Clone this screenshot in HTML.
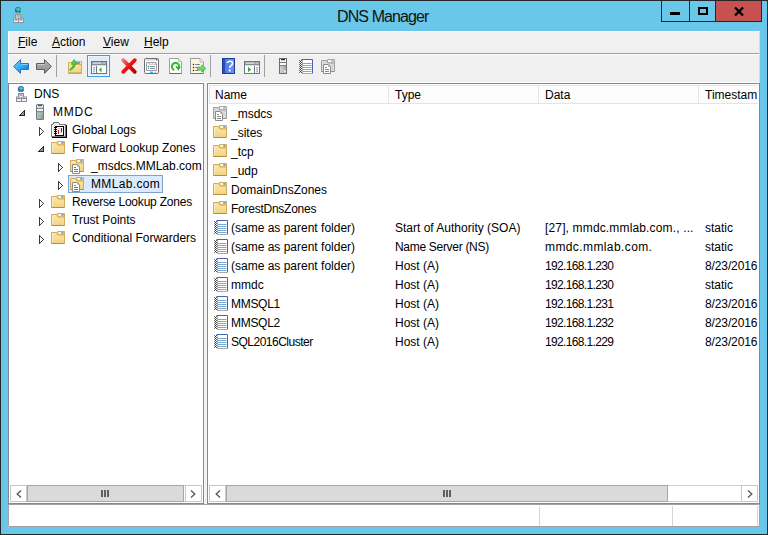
<!DOCTYPE html>
<html><head><meta charset="utf-8"><style>
*{margin:0;padding:0;box-sizing:border-box}
html,body{width:768px;height:535px;overflow:hidden}
body{position:relative;background:#262626;font-family:"Liberation Sans",sans-serif;font-size:12px;color:#000}
.a{position:absolute}
.t{position:absolute;white-space:nowrap;line-height:14px;height:14px;letter-spacing:0}
.n{letter-spacing:-0.65px}
.d{letter-spacing:-0.12px}
svg{position:absolute;overflow:visible}
.u{text-decoration:underline}
</style></head><body>

<svg width="0" height="0" style="position:absolute">
<defs>
<linearGradient id="fg" x1="0" y1="0" x2="0" y2="1"><stop offset="0" stop-color="#fbe7a8"/><stop offset="1" stop-color="#f2d283"/></linearGradient>
<linearGradient id="bluear" x1="0" y1="0" x2="1" y2="1"><stop offset="0" stop-color="#7fd2ff"/><stop offset="0.6" stop-color="#2aa2f0"/><stop offset="1" stop-color="#0068c8"/></linearGradient>
<linearGradient id="grayar" x1="0" y1="0" x2="0" y2="1"><stop offset="0" stop-color="#b8b8b8"/><stop offset="1" stop-color="#8a8a8a"/></linearGradient>
<linearGradient id="srvg" x1="0" y1="0" x2="1" y2="0"><stop offset="0" stop-color="#d8d8d8"/><stop offset="1" stop-color="#a8a8a8"/></linearGradient>
<linearGradient id="redx" x1="0" y1="0" x2="1" y2="1"><stop offset="0" stop-color="#f57070"/><stop offset="0.5" stop-color="#ee1010"/><stop offset="1" stop-color="#b80000"/></linearGradient>
<linearGradient id="help" x1="0" y1="0" x2="1" y2="1"><stop offset="0" stop-color="#5a86e8"/><stop offset="1" stop-color="#2f56c8"/></linearGradient>
<linearGradient id="srv" x1="0" y1="0" x2="1" y2="1"><stop offset="0" stop-color="#d4dce2"/><stop offset="1" stop-color="#8e989f"/></linearGradient>
<symbol id="folder" viewBox="0 0 16 16">
<path d="M6.5 1.5H13.5V5H6.5Z" fill="#f6e2a2" stroke="#d3ad5c"/>
<rect x="7.5" y="2.3" width="3" height="1.3" fill="#fff"/><rect x="10.3" y="2.3" width="2.2" height="1.3" fill="#3a86e2"/>
<path d="M0.5 2.5H5.5L7 5H13.5V13.5H0.5Z" fill="url(#fg)" stroke="#d2ab58"/>
<path d="M1.5 3.5V12.5" stroke="#fff3c8" opacity="0.8"/>
<path d="M0.5 13.5H13.5" stroke="#b98f3c"/>
</symbol>
<symbol id="zone_gray" viewBox="0 0 16 16">
<path d="M6.5 1.5H13.5V5H6.5Z" fill="#ececec" stroke="#a8a8a8"/>
<rect x="7.5" y="2.3" width="3" height="1.3" fill="#fff"/><rect x="10.3" y="2.3" width="2.2" height="1.3" fill="#9a9a9a"/>
<path d="M0.5 2.5H5.5L7 5H13.5V13.5H0.5Z" fill="#d9d9d9" stroke="#a2a2a2"/>
<path d="M0.5 13.5H13.5" stroke="#929292"/>
<path d="M2.5 6.5H7.5L9.5 8.5V15.5H2.5Z" fill="#fff" stroke="#8a8a8a"/>
<path d="M7.5 6.5V8.5H9.5" fill="none" stroke="#b8b8b8"/>
<path d="M4 9.5h2M4 11.5h4M4 13.5h4" stroke="#888"/>
</symbol>
<symbol id="zone" viewBox="0 0 16 16">
<path d="M6.5 1.5H13.5V5H6.5Z" fill="#f6e2a2" stroke="#d3ad5c"/>
<rect x="7.5" y="2.3" width="3" height="1.3" fill="#fff"/><rect x="10.3" y="2.3" width="2.2" height="1.3" fill="#3a86e2"/>
<path d="M0.5 2.5H5.5L7 5H13.5V13.5H0.5Z" fill="url(#fg)" stroke="#d2ab58"/>
<path d="M0.5 13.5H13.5" stroke="#b98f3c"/>
<path d="M2.5 6.5H7.5L9.5 8.5V15.5H2.5Z" fill="#fff" stroke="#8a8a8a"/>
<path d="M7.5 6.5V8.5H9.5" fill="none" stroke="#b8b8b8"/>
<path d="M4 9.5h2M4 11.5h4M4 13.5h4" stroke="#3c7fd0"/>
</symbol>
<symbol id="rec" viewBox="0 0 16 16">
<rect x="4" y="1.5" width="10.5" height="14" fill="#fff"/>
<path d="M4 15.5H14" stroke="#a8a8a8"/>
<path d="M3.5 1.5H14.5V15.5" fill="none" stroke="#4a60b0"/>
<path d="M5 5.5h8.5M5 7.5h8.5M5 9.5h8.5M5 11.5h8.5M5 13.5h8.5" stroke="#7ba8d0"/>
<path d="M4.5 2v13.5" stroke="#b0b0b0"/>
<path d="M1.5 2v13" stroke="#777" stroke-dasharray="1 1"/>
<path d="M2.5 3v12" stroke="#333" stroke-dasharray="1 1"/>
<path d="M3.5 2v13" stroke="#555" stroke-dasharray="1 1"/>
</symbol>
<symbol id="server" viewBox="0 0 8 16">
<rect x="0.5" y="0.5" width="7" height="15" rx="0.6" fill="url(#srv)" stroke="#6f777e"/>
<rect x="1" y="1" width="6" height="2.8" fill="#f4f6f8"/><rect x="2" y="1.2" width="4" height="1" fill="#26394a"/>
<rect x="1" y="5" width="6" height="2.2" fill="#eef2f4"/>
<path d="M1 4.4h6M1 7.7h6" stroke="#7a8288"/>
<rect x="5" y="12.5" width="2" height="2" fill="#44dd22"/>
</symbol>
<symbol id="servergray" viewBox="0 0 8 16">
<rect x="0.5" y="0.5" width="7" height="15" fill="url(#srvg)" stroke="#6e6e6e"/>
<rect x="1" y="1" width="6" height="3" fill="#fafafa"/><rect x="2" y="1" width="4" height="1.2" fill="#262626"/>
<rect x="1" y="5" width="6" height="2.2" fill="#fafafa"/>
<path d="M1 4.5h6M1 7.7h6" stroke="#7a7a7a"/>
<rect x="5" y="12.5" width="2" height="2" fill="#eaeaea"/>
</symbol>
</defs></svg>

<!-- window frame -->
<div class="a" style="left:1px;top:1px;width:766px;height:533px;background:#69c8e9"></div>
<!-- title icon -->
<svg style="left:13px;top:6px" width="11" height="17" viewBox="0 0 11 17">
<radialGradient id="glb2" cx="0.55" cy="0.4" r="0.6"><stop offset="0" stop-color="#8fd0ff"/><stop offset="0.5" stop-color="#2f7ae0"/><stop offset="1" stop-color="#1a3aa8"/></radialGradient>
<circle cx="5" cy="4" r="3" fill="url(#glb2)"/>
<path d="M2.2 2.6Q3.6 1.9 4.6 2.8L3.8 4.2Q2.6 4 2.2 2.6Z M6.8 2.9L8 3.6L7.9 5.3L6.8 4.6Z M3.6 5.8L5.8 5.6L5.6 7L4 6.9Z" fill="#2ee02e"/>
<rect x="2.5" y="8.5" width="5" height="4" fill="#eee" stroke="#959595"/>
<rect x="0.5" y="12.2" width="5" height="4.3" fill="#eee" stroke="#959595"/>
<rect x="5.5" y="12.2" width="5" height="4.3" fill="#eee" stroke="#959595"/>
<path d="M3.5 10h3M1.5 13.8h3M6.5 13.8h3" stroke="#4a5e9a" stroke-width="0.9"/>
</svg>
<div class="t" style="left:337px;top:8px;font-size:16px;line-height:17px;height:17px;color:#111;letter-spacing:-0.9px">DNS Manager</div>
<!-- caption buttons -->
<div class="a" style="left:661px;top:0;width:101px;height:22px;background:#262626"></div>
<div class="a" style="left:662px;top:1px;width:27px;height:20px;background:#69c8e9"></div>
<div class="a" style="left:690px;top:1px;width:25px;height:20px;background:#69c8e9"></div>
<div class="a" style="left:716px;top:1px;width:45px;height:20px;background:#c75050"></div>
<div class="a" style="left:670px;top:12px;width:10px;height:3px;background:#000"></div>
<div class="a" style="left:698px;top:7px;width:10px;height:8px;border:2px solid #000"></div>
<svg style="left:734px;top:7px" width="10" height="9" viewBox="0 0 10 9"><path d="M1 0.5L9 8.5M9 0.5L1 8.5" stroke="#000" stroke-width="2.4"/></svg>

<!-- client area -->
<div class="a" style="left:8px;top:31px;width:752px;height:496px;background:#f0f0f0;border-left:1px solid #fff;border-top:1px solid #fff;border-right:1px solid #dadada;border-bottom:1px solid #a0a0a0"></div>
<!-- menu -->
<div class="t" style="left:18px;top:35px"><span class="u">F</span>ile</div>
<div class="t" style="left:52px;top:35px"><span class="u">A</span>ction</div>
<div class="t" style="left:103px;top:35px"><span class="u">V</span>iew</div>
<div class="t" style="left:144px;top:35px"><span class="u">H</span>elp</div>
<div class="a" style="left:8px;top:53px;width:751px;height:1px;background:#a0a0a0"></div>
<div class="a" style="left:9px;top:54px;width:750px;height:1px;background:#fff"></div>
<!-- toolbar -->
<div class="a" style="left:56px;top:55px;width:1px;height:22px;background:#a0a0a0"></div>
<div class="a" style="left:210px;top:55px;width:1px;height:22px;background:#a0a0a0"></div>
<div class="a" style="left:264px;top:55px;width:1px;height:22px;background:#a0a0a0"></div>
<div class="a" style="left:87px;top:55px;width:23px;height:22px;background:#dcecfc;border:1px solid #3c9ce0;box-shadow:inset 0 0 0 1px #eef6fe"></div>
<div class="a" style="left:9px;top:82px;width:750px;height:1px;background:#fff"></div>
<!-- toolbar icons -->
<svg style="left:13px;top:58px" width="16" height="16" viewBox="0 0 16 16"><path d="M0.6 8.5L7.5 1.6V5.5H15.5V11.5H7.5V15.4Z" fill="url(#bluear)" stroke="#2776c6" stroke-linejoin="round"/><path d="M8.5 6.5h6" stroke="#a8e2ff" stroke-width="1" opacity="0.7"/></svg>
<svg style="left:36px;top:58px" width="16" height="16" viewBox="0 0 16 16"><path d="M15.4 8.5L8.5 1.6V5.5H0.5V11.5H8.5V15.4Z" fill="url(#grayar)" stroke="#5c5c5c" stroke-linejoin="round"/><path d="M1.5 6.5h7" stroke="#d0d0d0" opacity="0.8"/></svg>
<svg style="left:66px;top:57px" width="18" height="18" viewBox="0 0 18 18">
<path d="M9.5 4.5h6v3.5h-6z" fill="#f7e4a8" stroke="#d6b160"/><rect x="11" y="5.3" width="3" height="1.4" fill="#3d86e0"/>
<path d="M2.5 5.5h6l1.5 2h5.5v9h-13z" fill="url(#fg)" stroke="#d4ad5a"/>
<path d="M3 16h12.5" stroke="#c49a48"/>
<path d="M3.6 12.6C5.5 11 7.2 9.6 7.3 7.2L5.3 7.3L8 2.6L11.3 6.8L9.3 6.9C9.3 10.2 6.5 12.2 4.4 13.2Z" fill="#45d645" stroke="#22a022" stroke-width="0.7" stroke-linejoin="round"/>
</svg>
<svg style="left:91px;top:61px" width="16" height="13" viewBox="0 0 16 13">
<rect x="0.5" y="0.5" width="15" height="12" fill="#fff" stroke="#737880"/>
<rect x="1" y="1" width="14" height="3" fill="#868c94"/><rect x="1.5" y="1.5" width="9" height="1.2" fill="#eef0f2"/>
<rect x="11.5" y="1.5" width="1.2" height="1.2" fill="#eef0f2"/><rect x="13.3" y="1.5" width="1.2" height="1.2" fill="#eef0f2"/>
<rect x="1" y="4" width="14" height="1" fill="#d8dce0"/>
<path d="M5.5 5v7.5" stroke="#737880"/>
<path d="M2.3 6.8h1.6M2.3 8.8h1.6M2.3 10.8h1.6" stroke="#3a7fcc" stroke-width="1"/>
<path d="M10.5 6.2v5.2L7.8 8.8z" fill="#2cb52c"/>
</svg>
<svg style="left:121px;top:58px" width="16" height="16" viewBox="0 0 16 16"><path d="M2.2 2.2L13.8 13.8M13.8 2.2L2.2 13.8" stroke="url(#redx)" stroke-width="3.8" stroke-linecap="round"/></svg>
<svg style="left:142px;top:56px" width="18" height="19" viewBox="0 0 18 19">
<rect x="2.5" y="2.5" width="14" height="15" rx="1.2" fill="#fff" stroke="#6e6e6e" stroke-width="1"/>
<rect x="3" y="3" width="13" height="1.6" fill="#d6dade"/><rect x="14" y="3" width="1.2" height="1.2" fill="#3c5a8a"/>
<path d="M4.5 6.5h2.5v1.5h7.5v6.5h-10z" fill="#fff" stroke="#9c9ca8"/>
<rect x="8" y="6.8" width="2" height="1" fill="#fff"/><rect x="11" y="6.8" width="2" height="1" fill="#fff"/>
<path d="M7.5 6.5h6.5v1.5" fill="none" stroke="#9c9ca8"/>
<circle cx="6.5" cy="10.5" r="0.9" fill="#1ab0f5"/><path d="M8 10.5h5" stroke="#909090"/>
<circle cx="6.5" cy="12.4" r="0.6" fill="#8a8a8a"/><path d="M8 12.5h5" stroke="#909090"/>
<rect x="8" y="15.6" width="3" height="1.4" fill="#22baf2"/><rect x="12.3" y="15.6" width="2.2" height="1.4" fill="#c8c8c8"/>
</svg>
<svg style="left:166px;top:56px" width="18" height="19" viewBox="0 0 18 19">
<path d="M3.5 2.5h9l3 3v12h-12z" fill="#fff" stroke="#a2a2a2"/><path d="M12.5 2.5v3h3" fill="#f4f4f4" stroke="#b8b8b8"/>
<path d="M3.5 17.5h12" stroke="#6a6a6a"/>
<path d="M8.3 13.9A3.6 3.6 0 1 1 12.9 11.7" fill="none" stroke="#2fc22f" stroke-width="2.1"/>
<path d="M10.2 11.2L14.9 10.8L12.3 14.7z" fill="#22b822"/>
<path d="M10.2 10.2L12 12.6" stroke="#22b822" stroke-width="1.6"/>
</svg>
<svg style="left:186px;top:54px" width="24" height="24" viewBox="0 0 24 24">
<linearGradient id="expg" x1="0" y1="0" x2="0" y2="1"><stop offset="0" stop-color="#8cf08c"/><stop offset="1" stop-color="#3cc83c"/></linearGradient>
<path d="M4.5 4.5H14L17.5 8V19.5H4.5Z" fill="#fdf6dc" stroke="#999"/>
<path d="M14 4.5V8H17.5" fill="#f6f6f6" stroke="#b4b4b4"/>
<path d="M4.5 19.5H17.5" stroke="#777"/>
<circle cx="7.5" cy="10.6" r="0.75" fill="#222"/><circle cx="7.5" cy="13.5" r="0.75" fill="#222"/><circle cx="7.5" cy="16.4" r="0.75" fill="#222"/>
<path d="M9.3 10.5h4.5M9.3 13.5h3M9.3 16.5h3" stroke="#7a74a8"/>
<path d="M11.5 12.9H15.8V10.8L20 14.5L15.8 18.2V16.1H11.5Z" fill="url(#expg)" stroke="#3cb43c" stroke-width="0.7" stroke-linejoin="round"/>
</svg>
<svg style="left:222px;top:58px" width="13" height="16" viewBox="0 0 13 16">
<linearGradient id="helpg" x1="0" y1="0" x2="1" y2="0"><stop offset="0" stop-color="#4a6fd8"/><stop offset="1" stop-color="#6d94f2"/></linearGradient>
<rect x="0" y="0" width="13" height="16" fill="url(#helpg)"/><rect x="0" y="0" width="3" height="16" fill="#2c4cb8"/>
<rect x="0.5" y="0.5" width="12" height="15" fill="none" stroke="#1f3c9e"/>
<path d="M5.3 5C5.3 2.9 10.6 2.5 10.6 5.2C10.6 7.5 7.7 7.4 7.7 10" fill="none" stroke="#fff" stroke-width="1.6"/>
<rect x="6.7" y="11.5" width="2" height="2" fill="#fff"/>
</svg>
<svg style="left:244px;top:61px" width="16" height="13" viewBox="0 0 16 13">
<rect x="0.5" y="0.5" width="15" height="12" fill="#fff" stroke="#737880"/>
<rect x="1" y="1" width="14" height="3" fill="#868c94"/><rect x="1.5" y="1.5" width="9" height="1.2" fill="#eef0f2"/>
<rect x="11.5" y="1.5" width="1.2" height="1.2" fill="#eef0f2"/><rect x="13.3" y="1.5" width="1.2" height="1.2" fill="#eef0f2"/>
<rect x="1" y="4" width="14" height="1" fill="#d8dce0"/>
<path d="M10.5 5v7.5" stroke="#737880"/>
<path d="M12.3 6.8h1.6M12.3 8.8h1.6M12.3 10.8h1.6" stroke="#3a7fcc"/>
<path d="M4 5.8v5.4L7.2 8.5z" fill="#2cb52c"/>
</svg>
<svg style="left:279px;top:58px" width="8" height="16"><use href="#servergray"/></svg>
<svg style="left:298px;top:58px" width="16" height="16"><use href="#rec"/></svg>
<svg style="left:321px;top:58px" width="16" height="16"><use href="#zone_gray"/></svg>


<!-- tree pane -->
<div class="a" style="left:8px;top:83px;width:196px;height:421px;background:#fff;border:1px solid #828790"></div>
<div class="t" style="left:34px;top:87px">DNS</div>
<div class="t" style="left:53px;top:105px;letter-spacing:0.8px">MMDC</div>
<div class="t" style="left:72px;top:123px">Global Logs</div>
<div class="t" style="left:72px;top:141px">Forward Lookup Zones</div>
<div class="t" style="left:91px;top:159px">_msdcs.MMLab.com</div>
<div class="a" style="left:68px;top:175px;width:95px;height:18px;background:#dcebfc;border:1px solid #7da2ce"></div>
<div class="t" style="left:91px;top:177px;letter-spacing:0.35px">MMLab.com</div>
<div class="t" style="left:72px;top:195px;letter-spacing:-0.2px">Reverse Lookup Zones</div>
<div class="t" style="left:72px;top:213px">Trust Points</div>
<div class="t" style="left:72px;top:231px">Conditional Forwarders</div>
<svg style="left:51px;top:140px" width="16" height="16"><use href="#folder"/></svg>
<svg style="left:51px;top:194px" width="16" height="16"><use href="#folder"/></svg>
<svg style="left:51px;top:212px" width="16" height="16"><use href="#folder"/></svg>
<svg style="left:51px;top:230px" width="16" height="16"><use href="#folder"/></svg>
<svg style="left:70px;top:158px" width="16" height="16"><use href="#zone"/></svg>
<svg style="left:70px;top:176px" width="16" height="16"><use href="#zone"/></svg>

<!-- tree icons -->
<svg style="left:16px;top:86px" width="11" height="16" viewBox="0 0 11 16">
<radialGradient id="glb" cx="0.55" cy="0.4" r="0.6"><stop offset="0" stop-color="#8fd0ff"/><stop offset="0.5" stop-color="#2f7ae0"/><stop offset="1" stop-color="#1a3aa8"/></radialGradient>
<circle cx="5" cy="3" r="3.1" fill="url(#glb)"/>
<path d="M2.2 1.6Q3.6 0.9 4.6 1.8L3.8 3.2Q2.6 3 2.2 1.6Z M6.8 1.9L8 2.6L7.9 4.3L6.8 3.6Z M3.6 4.8L5.8 4.6L5.6 6L4 5.9Z" fill="#2ee02e"/>
<rect x="2.5" y="7.5" width="5" height="4" fill="#eee" stroke="#8c8c8c"/>
<rect x="0.5" y="11" width="5" height="4.5" fill="#eee" stroke="#8c8c8c"/>
<rect x="5.5" y="11" width="5" height="4.5" fill="#eee" stroke="#8c8c8c"/>
<path d="M3.5 9h3M1.5 12.6h3M6.5 12.6h3" stroke="#4a5e9a" stroke-width="0.9"/>
<path d="M3.5 10.5h3M1.5 14.3h3M6.5 14.3h3" stroke="#fff" stroke-width="0.9"/>
</svg>
<svg style="left:36px;top:104px" width="8" height="16"><use href="#server"/></svg>
<svg style="left:50px;top:121px" width="17" height="17" viewBox="0 0 17 17" shape-rendering="crispEdges">
<defs><pattern id="chk" width="2" height="2" patternUnits="userSpaceOnUse"><rect width="1" height="1" fill="#f2ec00"/><rect x="1" y="1" width="1" height="1" fill="#f2ec00"/></pattern>
<pattern id="chkk" width="2" height="2" patternUnits="userSpaceOnUse"><rect width="1" height="1" fill="#000"/><rect x="1" y="1" width="1" height="1" fill="#000"/></pattern></defs>
<path d="M1.5 3.5V15.5H15.5V3.5H9.5L8.5 1.5H3.5L2.5 3.5Z" fill="#fff" stroke="#7a7a7a"/>
<rect x="2" y="2" width="7" height="2" fill="url(#chk)"/>
<rect x="3" y="4" width="2" height="11" fill="url(#chk)"/>
<rect x="13" y="4" width="2" height="11" fill="url(#chk)"/>
<rect x="5.5" y="5.5" width="8" height="9" fill="#fff" stroke="#000"/>
<rect x="4" y="6" width="3" height="7" fill="url(#chkk)"/>
<path d="M7 7.5h5M7 9.5h5M7 11.5h5" stroke="#d8d8d8"/>
<rect x="8" y="9" width="1" height="4" fill="#f01010"/><rect x="11" y="7" width="1" height="4" fill="#1020f0"/>
<rect x="2" y="16" width="15" height="1" fill="#000"/><rect x="16" y="4" width="1" height="13" fill="#000"/>
</svg>
<!-- expanders -->
<svg style="left:19px;top:110px" width="6" height="6" viewBox="0 0 6 6" shape-rendering="crispEdges"><path d="M5 0h1v6h-6v-1h1v-1h1v-1h1v-1h1v-1h1z" fill="#262626"/><path d="M4 2h1v3h-3v-1h1v-1h1z" fill="#9a9a9a"/></svg>
<svg style="left:38px;top:146px" width="6" height="6" viewBox="0 0 6 6" shape-rendering="crispEdges"><path d="M5 0h1v6h-6v-1h1v-1h1v-1h1v-1h1v-1h1z" fill="#262626"/><path d="M4 2h1v3h-3v-1h1v-1h1z" fill="#9a9a9a"/></svg>
<svg style="left:39px;top:127px" width="5" height="9" viewBox="0 0 5 9" shape-rendering="crispEdges"><path d="M0 0h1v1h-1zM0 1h1v1h-1zM0 2h1v1h-1zM0 3h1v1h-1zM0 4h1v1h-1zM0 5h1v1h-1zM0 6h1v1h-1zM0 7h1v1h-1zM0 8h1v1h-1zM1 1h1v1h-1zM2 2h1v1h-1zM3 3h1v1h-1zM4 4h1v1h-1zM3 5h1v1h-1zM2 6h1v1h-1zM1 7h1v1h-1z" fill="#3a3a3a"/></svg>
<svg style="left:58px;top:163px" width="5" height="9" viewBox="0 0 5 9" shape-rendering="crispEdges"><path d="M0 0h1v1h-1zM0 1h1v1h-1zM0 2h1v1h-1zM0 3h1v1h-1zM0 4h1v1h-1zM0 5h1v1h-1zM0 6h1v1h-1zM0 7h1v1h-1zM0 8h1v1h-1zM1 1h1v1h-1zM2 2h1v1h-1zM3 3h1v1h-1zM4 4h1v1h-1zM3 5h1v1h-1zM2 6h1v1h-1zM1 7h1v1h-1z" fill="#3a3a3a"/></svg>
<svg style="left:58px;top:181px" width="5" height="9" viewBox="0 0 5 9" shape-rendering="crispEdges"><path d="M0 0h1v1h-1zM0 1h1v1h-1zM0 2h1v1h-1zM0 3h1v1h-1zM0 4h1v1h-1zM0 5h1v1h-1zM0 6h1v1h-1zM0 7h1v1h-1zM0 8h1v1h-1zM1 1h1v1h-1zM2 2h1v1h-1zM3 3h1v1h-1zM4 4h1v1h-1zM3 5h1v1h-1zM2 6h1v1h-1zM1 7h1v1h-1z" fill="#3a3a3a"/></svg>
<svg style="left:39px;top:199px" width="5" height="9" viewBox="0 0 5 9" shape-rendering="crispEdges"><path d="M0 0h1v1h-1zM0 1h1v1h-1zM0 2h1v1h-1zM0 3h1v1h-1zM0 4h1v1h-1zM0 5h1v1h-1zM0 6h1v1h-1zM0 7h1v1h-1zM0 8h1v1h-1zM1 1h1v1h-1zM2 2h1v1h-1zM3 3h1v1h-1zM4 4h1v1h-1zM3 5h1v1h-1zM2 6h1v1h-1zM1 7h1v1h-1z" fill="#3a3a3a"/></svg>
<svg style="left:39px;top:217px" width="5" height="9" viewBox="0 0 5 9" shape-rendering="crispEdges"><path d="M0 0h1v1h-1zM0 1h1v1h-1zM0 2h1v1h-1zM0 3h1v1h-1zM0 4h1v1h-1zM0 5h1v1h-1zM0 6h1v1h-1zM0 7h1v1h-1zM0 8h1v1h-1zM1 1h1v1h-1zM2 2h1v1h-1zM3 3h1v1h-1zM4 4h1v1h-1zM3 5h1v1h-1zM2 6h1v1h-1zM1 7h1v1h-1z" fill="#3a3a3a"/></svg>
<svg style="left:39px;top:235px" width="5" height="9" viewBox="0 0 5 9" shape-rendering="crispEdges"><path d="M0 0h1v1h-1zM0 1h1v1h-1zM0 2h1v1h-1zM0 3h1v1h-1zM0 4h1v1h-1zM0 5h1v1h-1zM0 6h1v1h-1zM0 7h1v1h-1zM0 8h1v1h-1zM1 1h1v1h-1zM2 2h1v1h-1zM3 3h1v1h-1zM4 4h1v1h-1zM3 5h1v1h-1zM2 6h1v1h-1zM1 7h1v1h-1z" fill="#3a3a3a"/></svg>

<!-- list pane -->
<div class="a" style="left:207px;top:83px;width:553px;height:421px;background:#fff;border:1px solid #828790"></div>

<div class="a" style="left:208px;top:84px;width:550px;height:419px;overflow:hidden">
<div class="a" style="left:1px;top:1px;width:549px;height:19px;background:#fcfcfc;border:1px solid #e4e4e4;border-right:none"></div>
<div class="a" style="left:180px;top:1px;width:1px;height:18px;background:#e5e5e5"></div>
<div class="a" style="left:330px;top:1px;width:1px;height:18px;background:#e5e5e5"></div>
<div class="a" style="left:490px;top:1px;width:1px;height:18px;background:#e5e5e5"></div>
<div class="t" style="left:7px;top:4px">Name</div>
<div class="t" style="left:187px;top:4px">Type</div>
<div class="t" style="left:337px;top:4px">Data</div>
<div class="t" style="left:497px;top:4px">Timestam</div>
<svg style="left:5px;top:21px" width="16" height="16"><use href="#zone_gray"/></svg>
<div class="t" style="left:23px;top:23px;letter-spacing:0px">_msdcs</div>
<svg style="left:5px;top:40px" width="16" height="16"><use href="#folder"/></svg>
<div class="t" style="left:23px;top:42px;letter-spacing:0px">_sites</div>
<svg style="left:5px;top:59px" width="16" height="16"><use href="#folder"/></svg>
<div class="t" style="left:23px;top:61px;letter-spacing:0px">_tcp</div>
<svg style="left:5px;top:78px" width="16" height="16"><use href="#folder"/></svg>
<div class="t" style="left:23px;top:80px;letter-spacing:0px">_udp</div>
<svg style="left:5px;top:97px" width="16" height="16"><use href="#folder"/></svg>
<div class="t" style="left:23px;top:99px;letter-spacing:0px">DomainDnsZones</div>
<svg style="left:5px;top:116px" width="16" height="16"><use href="#folder"/></svg>
<div class="t" style="left:23px;top:118px;letter-spacing:-0.25px">ForestDnsZones</div>
<svg style="left:5px;top:135px" width="16" height="16"><use href="#rec"/></svg>
<div class="t" style="left:23px;top:137px;letter-spacing:0px">(same as parent folder)</div>
<div class="t" style="left:187px;top:137px;letter-spacing:0px">Start of Authority (SOA)</div>
<div class="t" style="left:337px;top:137px;letter-spacing:0.15px">[27], mmdc.mmlab.com., ...</div>
<div class="t" style="left:497px;top:137px">static</div>
<svg style="left:5px;top:154px" width="16" height="16"><use href="#rec"/></svg>
<div class="t" style="left:23px;top:156px;letter-spacing:0px">(same as parent folder)</div>
<div class="t" style="left:187px;top:156px;letter-spacing:-0.3px">Name Server (NS)</div>
<div class="t" style="left:337px;top:156px;letter-spacing:0.4px">mmdc.mmlab.com.</div>
<div class="t" style="left:497px;top:156px">static</div>
<svg style="left:5px;top:173px" width="16" height="16"><use href="#rec"/></svg>
<div class="t" style="left:23px;top:175px;letter-spacing:0px">(same as parent folder)</div>
<div class="t" style="left:187px;top:175px;letter-spacing:0px">Host (A)</div>
<div class="t n" style="left:337px;top:175px">192.168.1.230</div>
<div class="t d" style="left:497px;top:175px">8/23/2016</div>
<svg style="left:5px;top:192px" width="16" height="16"><use href="#rec"/></svg>
<div class="t" style="left:23px;top:194px;letter-spacing:0px">mmdc</div>
<div class="t" style="left:187px;top:194px;letter-spacing:0px">Host (A)</div>
<div class="t n" style="left:337px;top:194px">192.168.1.230</div>
<div class="t" style="left:497px;top:194px">static</div>
<svg style="left:5px;top:211px" width="16" height="16"><use href="#rec"/></svg>
<div class="t" style="left:23px;top:213px;letter-spacing:-0.3px">MMSQL1</div>
<div class="t" style="left:187px;top:213px;letter-spacing:0px">Host (A)</div>
<div class="t n" style="left:337px;top:213px">192.168.1.231</div>
<div class="t d" style="left:497px;top:213px">8/23/2016</div>
<svg style="left:5px;top:230px" width="16" height="16"><use href="#rec"/></svg>
<div class="t" style="left:23px;top:232px;letter-spacing:-0.3px">MMSQL2</div>
<div class="t" style="left:187px;top:232px;letter-spacing:0px">Host (A)</div>
<div class="t n" style="left:337px;top:232px">192.168.1.232</div>
<div class="t d" style="left:497px;top:232px">8/23/2016</div>
<svg style="left:5px;top:249px" width="16" height="16"><use href="#rec"/></svg>
<div class="t" style="left:23px;top:251px;letter-spacing:-0.5px">SQL2016Cluster</div>
<div class="t" style="left:187px;top:251px;letter-spacing:0px">Host (A)</div>
<div class="t n" style="left:337px;top:251px">192.168.1.229</div>
<div class="t d" style="left:497px;top:251px">8/23/2016</div>
</div>
<!-- tree scrollbar -->
<div class="a" style="left:10px;top:485px;width:17px;height:17px;background:#fff;border:1px solid #c8c8c8"></div>
<div class="a" style="left:27px;top:485px;width:157px;height:17px;background:#dadada;border:1px solid #a6a6a6"></div>
<div class="a" style="left:185px;top:485px;width:17px;height:17px;background:#fff;border:1px solid #c8c8c8"></div>
<div class="a" style="left:184px;top:485px;width:1px;height:1px;background:#c8c8c8"></div>
<div class="a" style="left:184px;top:501px;width:1px;height:1px;background:#c8c8c8"></div>
<svg style="left:16px;top:490px" width="6" height="8" viewBox="0 0 6 8"><path d="M5 0.5L1.2 4L5 7.5" fill="none" stroke="#555" stroke-width="1.3"/></svg>
<svg style="left:190px;top:490px" width="6" height="8" viewBox="0 0 6 8"><path d="M1 0.5L4.8 4L1 7.5" fill="none" stroke="#555" stroke-width="1.3"/></svg>
<div class="a" style="left:101px;top:490px;width:2px;height:7px;background:#606060"></div>
<div class="a" style="left:104px;top:490px;width:2px;height:7px;background:#606060"></div>
<div class="a" style="left:107px;top:490px;width:2px;height:7px;background:#606060"></div>
<!-- list scrollbar -->
<div class="a" style="left:209px;top:485px;width:17px;height:17px;background:#fff;border:1px solid #c8c8c8"></div>
<div class="a" style="left:226px;top:485px;width:442px;height:17px;background:#dadada;border:1px solid #a6a6a6"></div>
<div class="a" style="left:668px;top:485px;width:73px;height:17px;background:#fff;border-top:1px solid #d0d0d0;border-bottom:1px solid #d0d0d0"></div>
<div class="a" style="left:741px;top:485px;width:17px;height:17px;background:#fff;border:1px solid #c8c8c8"></div>
<svg style="left:215px;top:490px" width="6" height="8" viewBox="0 0 6 8"><path d="M5 0.5L1.2 4L5 7.5" fill="none" stroke="#555" stroke-width="1.3"/></svg>
<svg style="left:747px;top:490px" width="6" height="8" viewBox="0 0 6 8"><path d="M1 0.5L4.8 4L1 7.5" fill="none" stroke="#555" stroke-width="1.3"/></svg>
<div class="a" style="left:443px;top:490px;width:2px;height:7px;background:#606060"></div>
<div class="a" style="left:446px;top:490px;width:2px;height:7px;background:#606060"></div>
<div class="a" style="left:449px;top:490px;width:2px;height:7px;background:#606060"></div>
<!-- status bar -->
<div class="a" style="left:8px;top:504px;width:751px;height:1px;background:#9ea2a8"></div>
<div class="a" style="left:9px;top:505px;width:750px;height:21px;background:#fff"></div>
<div class="a" style="left:8px;top:505px;width:1px;height:21px;background:#a4a4a4"></div>
<div class="a" style="left:759px;top:504px;width:1px;height:23px;background:#a4a4a4"></div>
<div class="a" style="left:204px;top:83px;width:3px;height:421px;background:linear-gradient(90deg,#f9f9f9,#eeeeee,#f9f9f9)"></div>
<div class="a" style="left:539px;top:506px;width:1px;height:20px;background:#d5d5d5"></div>
<div class="a" style="left:672px;top:506px;width:1px;height:20px;background:#d5d5d5"></div>
<div class="a" style="left:757px;top:506px;width:1px;height:20px;background:#d5d5d5"></div>

</body></html>
